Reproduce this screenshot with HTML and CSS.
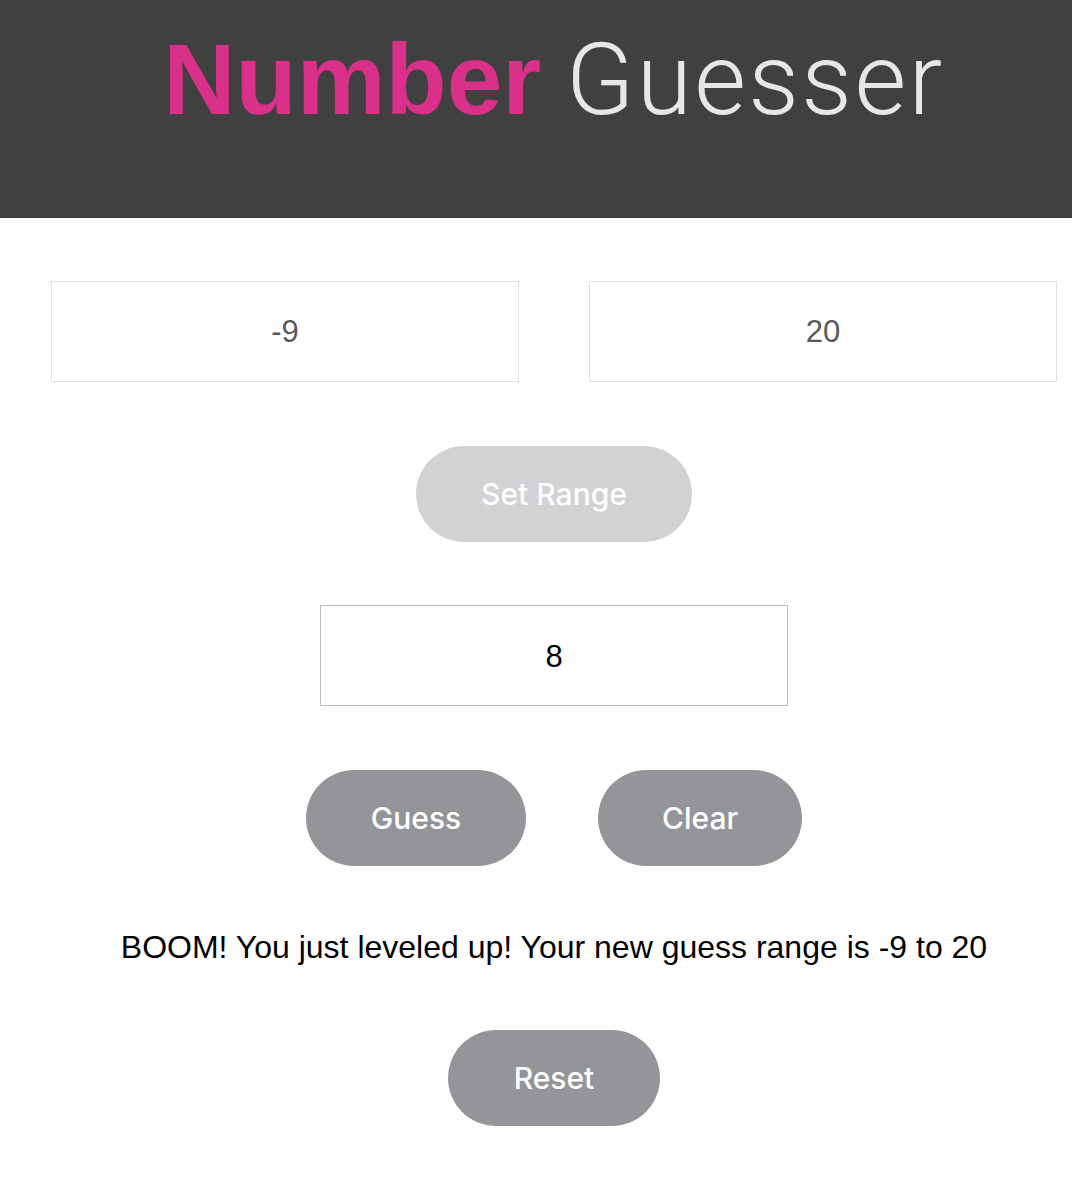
FILE: index.html
```html
<!DOCTYPE html>
<html lang="en">
<head>
<meta charset="utf-8">
<title>Number Guesser</title>
<link rel="stylesheet" href="styles.css">
</head>
<body>
<div class="page">
  <header class="header">
    <h1 class="title"><span class="title-strong">Number</span> <span class="title-light">Guesser</span></h1>
  </header>
  <main class="main">
    <div class="range-row">
      <input class="field field-range" type="text" value="-9">
      <input class="field field-range" type="text" value="20">
    </div>
    <button class="pill pill-disabled pill-set">Set Range</button>
    <input class="field field-guess" type="text" value="8">
    <div class="button-row">
      <button class="pill pill-guess">Guess</button>
      <button class="pill pill-clear">Clear</button>
    </div>
    <p class="message">BOOM! You just leveled up! Your new guess range is -9 to 20</p>
    <button class="pill pill-reset">Reset</button>
  </main>
</div>
</body>
</html>
```

FILE: styles.css
```css
html, body {
  margin: 0;
  padding: 0;
  background: #ffffff;
  overflow: hidden;
}

.page {
  width: 1108px;
}

.header {
  height: 218px;
  background: #404040;
  display: flex;
  justify-content: center;
  align-items: flex-start;
}

.title {
  margin: 0;
  padding-top: 24px;
  font-size: 100px;
  line-height: 110px;
  font-family: "Liberation Sans", Arial, sans-serif;
  white-space: nowrap;
}

.title-strong {
  color: #d93189;
  font-weight: 700;
}

.title-light {
  color: #e6e7e8;
  font-family: Roboto, "Liberation Sans", sans-serif;
  font-weight: 300;
  letter-spacing: 2.4px;
  margin-left: -3px;
}

.main {
  display: flex;
  flex-direction: column;
  align-items: center;
  padding-top: 63px;
}

.range-row {
  display: flex;
  gap: 70px;
}

.field {
  box-sizing: border-box;
  width: 468px;
  height: 101px;
  margin: 0;
  background: #ffffff;
  text-align: center;
  font-family: "Liberation Sans", Arial, sans-serif;
  font-size: 31px;
  outline: none;
  padding: 0;
}

.field-range {
  border: 1px solid #e1e1e1;
  color: #58595b;
}

.field-guess {
  border: 1px solid #bcbcbc;
  color: #000000;
  margin-top: 63px;
  padding-top: 3px;
}

.pill {
  box-sizing: border-box;
  height: 96px;
  border: none;
  border-radius: 48px;
  background: #939598;
  color: #ffffff;
  font-family: Inter, "Liberation Sans", sans-serif;
  font-size: 30px;
  font-weight: 500;
  padding: 0;
  cursor: pointer;
}

.pill-disabled {
  background: #d1d2d4;
}

.pill-set {
  width: 276px;
  margin-top: 64px;
}

.button-row {
  display: flex;
  gap: 72px;
  margin-top: 64px;
}

.pill-guess {
  width: 220px;
}

.pill-clear {
  width: 204px;
}

.message {
  margin: 63px 0 0;
  font-family: "Liberation Sans", Arial, sans-serif;
  font-size: 32px;
  line-height: 36px;
  color: #000000;
}

.pill-reset {
  width: 212px;
  margin-top: 65px;
}
```
